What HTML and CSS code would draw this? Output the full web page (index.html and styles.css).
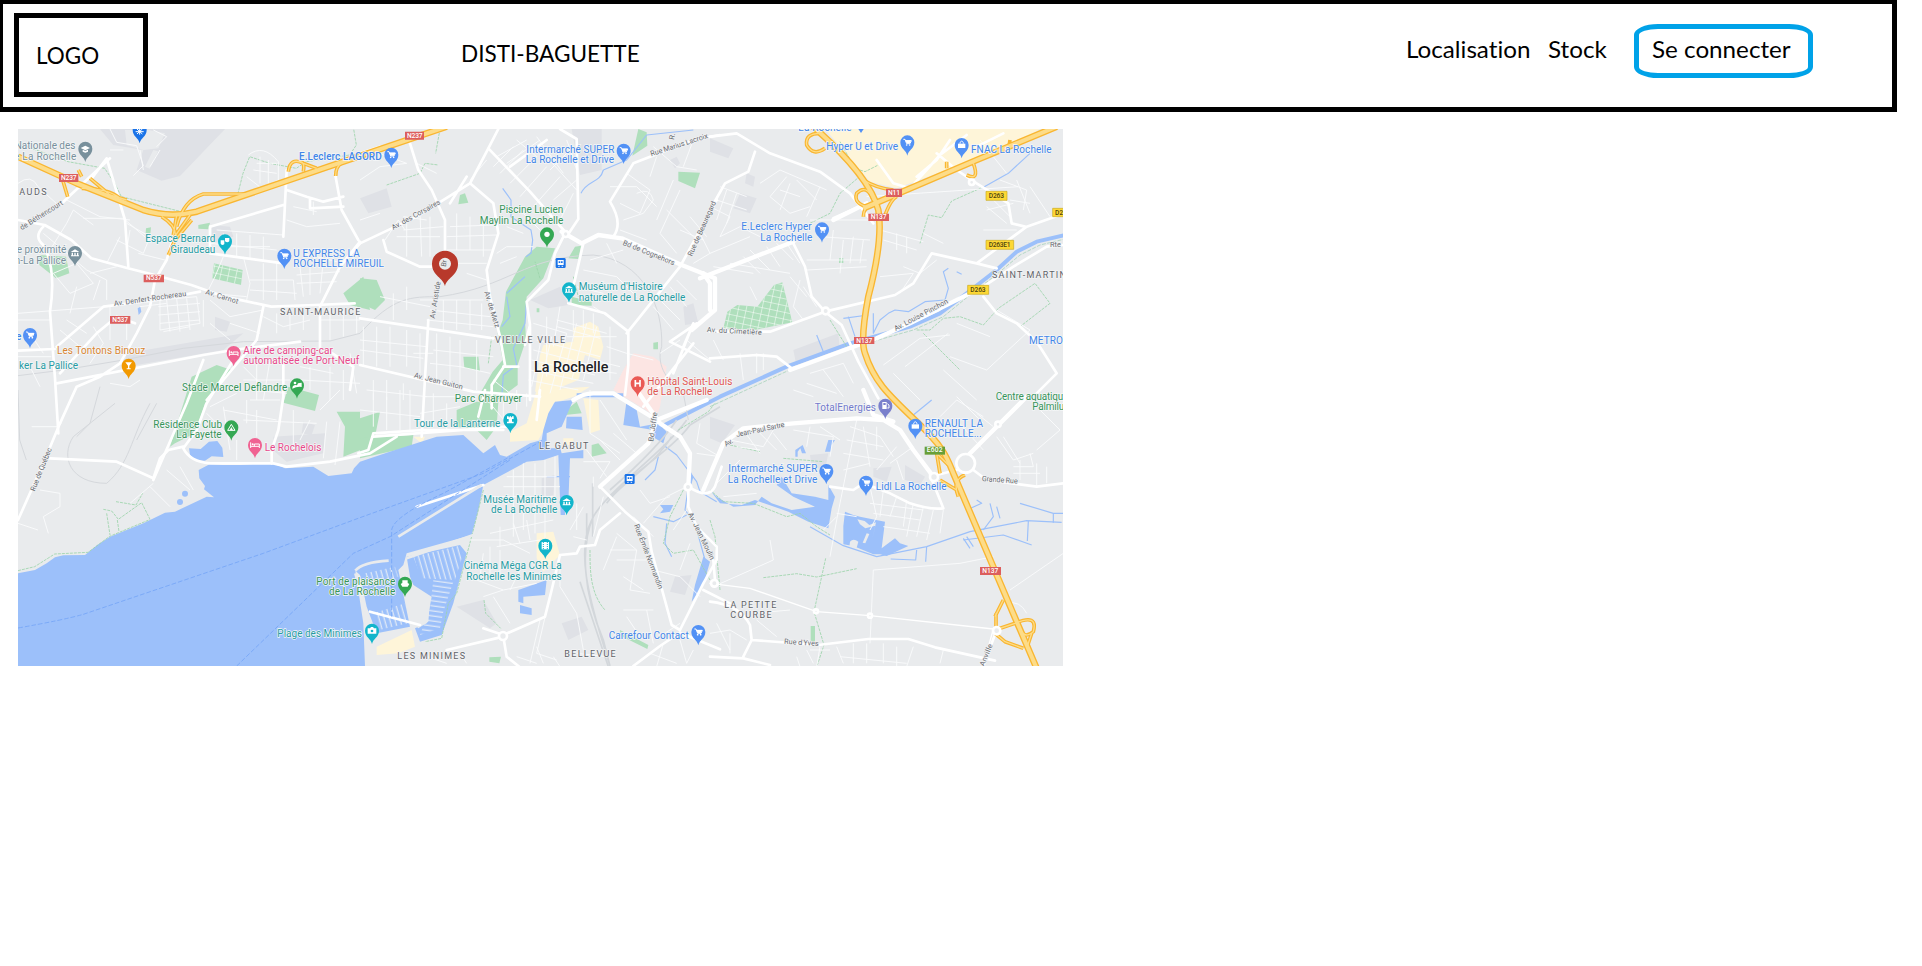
FILE: index.html
```html
<!DOCTYPE html>
<html lang="fr">
<head>
<meta charset="utf-8">
<title>Disti-Baguette</title>
<link rel="stylesheet" href="styles.css">
</head>
<body>
<header class="topbar">
  <div class="logo"><span class="word word-logo">LOGO</span></div>
  <div class="brand"><span class="word word-brand">DISTI-BAGUETTE</span></div>
  <nav class="nav">
    <a class="nav-loc"><span class="word word-loc">Localisation</span></a>
    <a class="nav-stock"><span class="word word-stock">Stock</span></a>
    <a class="login"><span class="word word-login">Se connecter</span></a>
  </nav>
</header>
<main class="content">
<svg class="map" viewBox="24 27 3135 1611" role="img" aria-label="La Rochelle">
<defs>
  <path id="pin" d="M0 40C-3 23-21 20-21 0A21 21 0 1 1 21 0C21 20 3 23 0 40z"/>
  <g id="cart"><path class="ico" d="M-12-9h5l5 13h10l4-9h-17"/><path class="icof" d="M-6-6H12L7 3H-2z"/><circle class="icof" cx="-2" cy="8" r="2.5"/><circle class="icof" cx="7" cy="8" r="2.5"/></g>
  <g id="bag"><path class="icof" d="M-11-4h22v13h-22z"/><path class="ico" d="M-5-4c0-10 10-10 10 0"/></g>
  <g id="bed"><path class="ico" d="M-13-8V9M-13 4H13V9M13 4V-3H-2V4"/><circle class="icof" cx="-7" cy="-2" r="3"/></g>
  <g id="museum"><path class="icof" d="M-13-3L0-11 13-3zM-10-1h4v8h-4zM-2-1h4v8h-4zM6-1h4v8H6zM-12 7h24v3h-24z"/></g>
  <pattern id="berth" width="15" height="60" patternUnits="userSpaceOnUse" patternTransform="rotate(-16)"><path class="berth" d="M7 0V60"/></pattern>
  <pattern id="berth2" width="60" height="15" patternUnits="userSpaceOnUse" patternTransform="rotate(8)"><path class="berth" d="M0 7H60"/></pattern>
  <pattern id="plots" width="23" height="20" patternUnits="userSpaceOnUse" patternTransform="rotate(12)"><path class="blockline" d="M0 0H23M0 0V20"/></pattern>
</defs>
<path class="ground" d="M0 0H3200V1700H0z"/>

<g class="zone">
  <path d="M270 27H645L510 168 455 182 380 150 400 90 310 75z"/><path d="M605 315l55 5 10 30-65 20zM615 590l45 15-10 30-35-5zM350 700L700 640 640 690 380 735 340 760z"/>
  <path class="ground" d="M345 30h70l50 10-20 45-45 5-50-15zM430 90l14 4-25 52-14-6z"/>
  <g transform="translate(1050 0)"><path d="M635 27H725V150L660 165zM0 235l80-30 15 55-70 20zM510 540l90-40 25 55-60 10zM930 120l20-10 10 20-15 15zM970 560l30-10 15 60-40 5z"/></g>
  <g transform="translate(2100 0)"><path d="M0 55l70 30-15 30-55-20zM110 160l25 10-5 30-25-10zM90 220l50 15-20 45-50-15zM250 690L385 640 390 695 260 740z"/></g>
  <g transform="translate(0 810)"><path d="M790 140L945 130 940 190 830 215 795 185zM880 95l35 10-10 30-30-5z"/></g>
  <g transform="translate(1050 810)"><path d="M545 265l40-10-5 60-35 10zM290 650l80-20 40 70-20 15zM945 560l50-5-20 60-45-10zM605 700l60-20 20 40-60 30z"/></g>
  <g transform="translate(2100 810)"><path d="M0 80l75 25-40 55-35-15zM300 195l55-5-10 50-40-10zM490 235l55-5-15 45-40-15zM585 225l60 35-15 25-45-15z"/></g>
</g>

<g class="urban">
  <g transform="translate(1050 0)"><path d="M690 605l25 15 15 60-10 40-45-15-20 75-50 20-20 20-60-5 15-110 10-30 90-10 0-40z"/></g>
  <g transform="translate(2100 0)"><path d="M345 27H990L900 80 560 205 480 185 400 90z"/></g>
  <g transform="translate(1050 810)"><path d="M530 0L690-10 640 20 580 40 555 115 535 150 450 155 450 125 500 100zM670 25l45 5 5 90-30 10zM610 145l30 0v20h-30zM530 430l50-5 20 70-50 50-20-40zM50 770l105-50 10 50-50 20-65 5zM160 140h35l-10 20z"/></g>
</g>
<path class="hospital" d="M1870 700l60 10 40 30-20 120-10 30-130-80 30-60z"/>

<g class="park">
  <path d="M1060 470L1000 520l20 35 60 15z"/><path d="M565 315l35-7-5 20-30-2zM408 325l15-3-2 20-14-2z"/>
  <path d="M88 405l80 5 10 50-40 15-50-40zM612 430L698 450 693 495 606 475z"/>
  <path d="M480 980l65-210 75-35 45 15-80 100-30 90-60 30zM835 800l92 25-12 48-95-25z"/>
  <path d="M980 875h70v20l60-20-20 100-90 35 5-90z"/>
  <path d="M1050 955l160-10-5 35-155 35z"/>
  <g transform="translate(1050 0)">
    <path d="M0 475l50 5 25 60-30 30-45-20zM835 27l25 10 2 40-45 30zM955 155l65 3-15 47-50-22zM300 225l15-5 10 28-30 5zM625 415l20-35 18-3-8 40zM310 710h45l5 43-47-10zM635 530l60 15v12l-60-2zM530 565h8v12h-8z"/>
    <path d="M495 410l35-30 55 5-35 90-50 55-5 70 3 60-25 75 0 60-60 45-60 25 10-50 35-60 30-35-15-80 15-40 10-85z"/>
    <path d="M880 668l14-2v22h-14z"/>
  </g>
  <g transform="translate(2100 0)"><path d="M40 625l12-50 30-20 60 5 50-65 25-8 30 120-110 22zM387 415h13v14h-13z"/></g>
  <g transform="translate(1050 810)"><path d="M290 60l60-25 65 0-5 75-30 40-30-30-60-10zM625 55l25-20 15 35-50 5zM695 165l20-5 25 30-45 10zM780 720l85 45-3 12-80-40zM388 802l35-2-5 20-30-5z"/></g>
  <g transform="translate(2100 810)"><path d="M302 708h13v52h-13z"/></g>
</g>
<path fill="url(#plots)" d="M2140 625l12-50 30-20 60 5 50-65 25-8 30 120-110 22zM612 430L698 450 693 495 606 475z"/>

<g class="water">
  <path d="M24 1360L75 1350 110 1330 135 1312 160 1306 225 1305 262 1275 300 1250 400 1210 465 1178 495 1175 590 1130 612 1132 582 1108 585 1098 568 1075 566 1050 600 1032 640 1035 690 1035 760 1030 800 1034 825 1045 910 1040 955 1068 1025 1060 1032 1045 1050 1025 1130 998 1280 950 1360 945 1420 1000 1455 975 1470 1005 1490 1010 1560 970 1595 960 1600 930 1615 880 1635 845 1690 840 1655 920 1610 940 1610 985 1645 985 1645 965 1655 1000 1720 990 1720 1015 1680 1015 1675 1150 1665 1150 1665 1185 1652 1185 1645 1005 1600 1020 1550 1025 1420 1095 1405 1170 1385 1245 1190 1300 1180 1335 1165 1350 1200 1520 1100 1540 1070 1460 1050 1365 1036 1352 1060 1510 1065 1638 24 1638z"/>
  <path d="M537 985l35 2 25-22 25-2 15 20 3 28-35-2-20 13-30-2-15-15z"/>
  <circle cx="525" cy="1121" r="9"/><circle cx="510" cy="1146" r="9"/><path d="M383 565l8-5 3 15-8 10z"/>
  <g transform="translate(1050 810)">
    <path d="M140 500L300 465 320 490 280 640 245 735 180 755 165 715 200 700 215 620 160 585 150 560z"/>
    <path d="M620 80l45 0 3 40-50-5zM800 30l30 30 10 50 55-10 25 25-10 35-25-15-5-25-90-15zM475 600l85-30-5 45-65 5 0 20-15-5zM480 645l35 10 0 20-35-5zM900 345l40 0-10 20-30 5 10-12zM990 240l10 20-10 40M1030 500l20 15-20 70-35 50 10-50z"/>
  </g>
  <g transform="translate(2100 810)">
    <path d="M0 300l20 20 50 30 65-5 20-25 30 20 60 20 70-10-65-30-50-35 15-25 30 50 70 10 40 10 0-45 20 35-10 35-10 60-60-20-60-30-100-35-40 15-65-5z"/>
    <path d="M405 365l25 10 20 5 75 15-10 80 40-30 15 15 25 8-65 30-20-5-20 0-60-25-30-5 0-55zM256 200l0-20 22-15 10 25-12 0-5-15-8 10 0 15zM345 185l10-35 20 0-10 15-3 20z"/>
  </g>
</g>
<path fill="url(#berth)" d="M1210 1310L1345 1278 1360 1300 1335 1380 1235 1375zM1065 1360l90-20 10 30-85 30zM1090 1480l95-30 8 60-85 20z"/>
<path fill="url(#berth2)" d="M1270 1380l60 5-30 90-10 50-60 20 30-80z"/>
<path class="land" d="M1185 1400l20-10 55 55-5 60-30 20-20-20z"/>
<path class="islets" d="M2542 1198l22 5 14 12 20-8-12 55 10-45-30 8-16-12zM2520 1265q10-12 25 0l-5 18-22-2zM2570 1240l8 2-12 28-8-2z"/>

<g class="stream">
  <g transform="translate(1050 0)"><path d="M730 150C720 190 680 180 663 220M730 150L800 120 860 45 1000 30M428 205l25 35 0 50 60 40 5 30-5 40-15 10M495 470l-55 50M500 540l-5 70-35 75 10 50-40 30-5 70M440 530l10 60-25 30"/></g>
  <g transform="translate(2100 0)"><path d="M815 205L895 160 960 100M400 595l75-10M415 590l20 60M490 580v60l20-40 25-20 20-10 40 5 50-30 60-5 10-35-15-50 15-10M740 455l15 8M320 645l20 50"/></g>
  <g transform="translate(1050 810)"><path d="M910 165l40 30 60 80 10 30 50 30M880 380l60 15 40-20M920 400l-5 60 20 40M985 290l-10 70 30 40 30 110M560 260l70 0M855 270l30-30 10-40"/></g>
  <g transform="translate(2100 810)"><path d="M610 75l55-45M770 360l45-20-15-10M840 340l10 40-30 40M860 350l10 35M930 340l100 30h30M1030 370v28M770 440l20 30M760 445l20 30"/><path d="M300 410l100 57 100 33 150-30 130-45 170-33 105 5M760 450l120-15 85 30M650 470l-3 45M620 480l-3 30-75-3M955 393l-3 60"/></g>
</g>
<path class="canal" d="M1700 826H1840M1945 925L2130 830 2330 740 2520 670 2700 620 2790 580 2870 520 2960 450 3020 395 3080 365 3165 345"/>
<path class="canalbank" d="M2100 860L2330 754 2520 684 2710 630 2800 590 2880 525 2970 455 3030 405 3090 375 3165 357"/>

<g class="rail">
  <path d="M24 767L160 750 340 720 520 685 700 665 960 663 1050 640M24 810l5 150 20 60M270 800L240 910 200 950"/>
  <path d="M315 850L190 950C150 1010 180 1090 290 1090 360 1030 360 960 420 850M380 960l60-110"/>
  <path d="M1050 640C1150 530 1200 530 1290 530 1500 500 1540 410 1750 405 1900 420 1960 560 1955 680 1935 740 1980 790 2020 820L2035 900"/>
</g>
<g class="tracks">
  <path d="M2040 915C1980 1000 1800 1100 1750 1190 1710 1280 1720 1420 1780 1560L1800 1638M2030 900C1960 1000 1780 1120 1745 1200 1700 1290 1730 1420 1800 1638M1710 1385l40 120 45 135M1730 1180v90M1748 1090v160M2130 860L2040 915M1985 950C1930 1040 1830 1090 1790 1150M2000 900C1960 960 1880 1040 1800 1110"/>
</g>

<g class="trail">
  <path d="M24 1352l50-12 60-38 100-5 65-48 120-50M318 1145l60 10 20-35M280 1168l25 5 20 25 70-50 25 50M290 1180l10 65M322 1200l5 35"/>
  <path d="M24 70l150 55 110 20 30 45 20 40 180 45 50-50 120-5 15-60 20-50 60 20 80 15 30-20 130-20 20-30-10-60"/>
  <g transform="translate(1050 0)"><path d="M240 27L227 100M80 195l100-35 15-30 40 5M540 475l-15-50M640 470l15 60M395 650l-10 80"/></g>
  <g transform="translate(2100 0)"><path d="M390 65l45 80 30 10 40-20M300 310l60-30 30-60 70-60M630 370l25-85 40 8 30-50 90-40M620 630l40 0 40-35 50-5 70 25 45-50 110-75 45 60-90 70M640 640l110 110M360 600l50 80"/></g>
  <g transform="translate(1050 810)"><path d="M370 300l-30 120-50 190-25 30-20 105-50 10M372 630l5 40 45 45M690 480c0 60 0 130 45 180M970 300l-40 80-20 80 30 30 60-10 50 90M1065 40l-20 25-90 55"/></g>
  <g transform="translate(2100 810)"><path d="M0 300l40 35 90 5 100 40 40-10 50 40 40 25M0 390l15 50 15 160M160 563l100-12 60 10 120-25M347 505l-35 160 30 100-20 60M60 165l90 20M220 205l120 10"/></g>
</g>

<g class="minor">
  <path d="M24 190q40-30 60 10l60 55M150 260l20-20 100 50 90 10M190 270l-20 40-50 80M190 270l60 45M220 295l120 0 70 60M350 310l70 40-20 50-80-40M360 330l-10 60M100 340l130 110 60 30 0 60M130 460l70-30 50 60-70 30zM200 500l-20 80M240 460l80-20M330 350l-40 80M24 580l260-20M24 600h100M300 560v100M385 400l80 20M250 540l20-60M350 600l0 60"/>
  <path d="M300 27l20 40 60 10 20 60-30 30M300 90h40M390 90l10 60M430 30l40 20-30 30M450 90l-30 50"/>
  <path d="M715 105q45-35 90 20l0 55-50 25-45-35M740 130h60M730 150l70 10M750 110v80M775 120v80M910 245l0 40M850 260l70 15M830 300l60 20 100-10M620 330l200 15M640 340v55M680 340v70M720 345v75M760 350v70M600 370l200 20M660 380h120M640 410l-25 60-20 40M700 410l20 80-10 50M600 520l110 10M720 480l130 0 5 60M760 430v110M800 430v110M720 510l140 10M870 440l10 90M900 440v85M940 420l-10 100M860 465l130-10M860 490l120-5M880 400l120 30"/>
  <path d="M450 540l110-10 10 80-120 20zM470 540l10 95M500 535l10 100M530 535l10 95M445 560l125-10M445 585l125-10M450 610l120-10M460 635l80-15M580 540l0 80M600 540l60 50 100-20M600 610l60 50M760 590l60 30 80-20M800 580v60M840 570v60M880 560v70M660 610l90 30M930 600h120M960 560v100M1000 570v80M1040 560v80"/>
  <path d="M150 630l60 50M250 620l30 50-40 60M50 720l40 80M24 710h100M60 640l40 60M170 600l60 40M300 790l60 10 30-20M390 560l80-10M640 780l40-50M700 740l60 60M740 730v110M780 720l-20 120M700 780l140 0M720 810l110 10M870 740l100 20M900 740v70M960 740v100M1000 750v90M870 780l180 10M1020 700l20 120"/>
  <g transform="translate(1050 0)"><path d="M0 180l60-40 80-10M30 90l110 40M170 130l60 30M0 300l60-20M75 360l40-60 20 30M130 290l70 10M130 330l120-10M110 350l130 0M140 310l0 100M180 280l5 130M210 290v120M270 320l130-5M260 350l150-5M290 280v110M330 290v100M370 290v120M260 390l140 0M280 430l100 0M320 460l60 20M380 120l-50 60M400 140l60-60M420 160l70-70M450 190l80-80M480 230l80-90M520 260l80-90M410 110l90-50M440 130l100-70M570 150l60-60 20 60M580 240l70-60M600 300l40-80M620 60l30 80M470 60l60 50M530 50l80 110M550 100l100 110M420 260l60 10 60 60M440 320l50 20M410 400l30-20 80 0M420 430l50-20"/>
  <path d="M100 520v80M60 530l150 30M140 500v70M180 540l190 0M210 570l180 20M250 540v90M290 540v90M330 540v90M365 550v80M200 600l200 20M10 620v120M50 620v120M90 620v120M140 630v110M180 640v120M0 660l200 20M0 690l190 25M230 640v150M270 650v150M300 660v130M350 660v150M220 690l180 20M210 730l90 10 90 20M160 700h60M40 780v60M80 780v60M130 790v50M20 810l180 20M400 780l50 40"/>
  <path d="M750 200l80 0 60 60M800 160l70 50-30 70-60-30M830 220q40-20 50 20l-30 40-60 20M890 110l-20 60M880 80l70 60 60 10M940 180l-50 120M960 210l-60 130M1000 60l-30 80M990 290l50 60M960 330l70 30M920 270l100 100M900 340l50 60M1020 340l30 60-50 30M780 330l80 30M670 450l100 20 60 60M650 500l80 20M690 420l100-30M740 370l30 60M700 560l60 40M600 560l-20 120M560 590v180M520 610l100 30M640 570v60M670 570v60M700 580v60M590 600l150 40M620 650h150M750 620v160M740 680l60 20M700 720l80 20M690 750l80 10M800 700l80 20M880 560l60 70M900 540l60 60M930 500l50 60M950 480l60 60M980 660l70 60M900 700l60-40"/>
  <path d="M530 660l190 50M520 690l190 50M515 720l190 45M510 750l190 40M505 780l150 30M590 620l130 35M650 610l-50 200M680 610l-45 170M710 620l-40 160M620 640l-50 180M575 650l-40 170M545 650l-30 150"/></g>
  <g transform="translate(2100 0)"><path d="M150 190l60-40 140 60M230 170l-50 60 60 50 60-20M210 210l60 20M240 190l-30 80M260 180l60 60M330 200l-40 90M30 200l80 30M20 240l90 30M0 260l60 30-30 60M50 210l-30 90M80 220l-30 90M30 350l60-30 60 30M0 400l120-50M120 390l60 60M170 380l40 60M200 370l50 50M230 370l40 60M60 430l180 30M100 410l50 50M10 440l120 20M290 420h180M290 450l180-10M300 300l180 0M330 350l150 10M370 330l-10 90M400 360l-10 100M430 350l-10 80M460 360l-10 70M240 470l50 60M270 480l-20 80 30 40M280 500l40 60M510 330l130 35M520 360l100 30M560 340v50M590 350v50M510 470l100-10M580 440l50 20 50-40M610 460l-40 60M640 340l60 30M810 60l80 100M840 230l60 60M830 260l60 50M870 180l80 30-10 60M920 180l40 100M960 200l60 90M900 240l60 10M830 270l80-20M820 330l100 0M120 500l20 40M90 700l10 80M140 700v60M160 700v50M10 660l30 60M300 760l100-30 30 60M340 750l60 80M290 790l90 30M250 810l60 20"/></g>
  <g transform="translate(2100 0)"><path d="M470 230L925 200M585 740l130-100M550 760l80 80M520 735l110-80 90-10M740 610l100 40M860 570l100 60-130 120-110-40M700 750l100 90"/></g>
  <g transform="translate(0 810)"><path d="M24 400l60 20M90 300l60 10 0 40-50 30 15 50M65 110h80M420 290l60 60M470 240l70 60M430 280l-70 60M510 230l40 70M640 50l20 130M680 150v60M710 30v70M740 60v80M640 60l160 30M700 90l220 10M720 30l90 0M850 60v120M900 90l-30 60M950 95l-10 110M990 95l-15 130M930 60l60-60M590 70l60 60 30-20M600 50l80-40"/></g>
  <g transform="translate(1050 810)"><path d="M40 10v100M80 20v100M120 0v120M150 0v120M220 10v100M260 40v80M0 60l180 20M180 70l120-20M190 20l160 0M390 40l50 60M430 20v70M470 0v60M500 10v40M690 0v130M720 30l80 120M690 130l90 60M760 130l70 60M720 150l60 60M670 215h80l-30 50M680 180l60 80M700 260l0 30M460 240v200M490 220v200M525 220v210M555 210v240M585 200v120M440 260h150M430 290h170M400 320l180 0M390 430l190-40M410 470l130-20M390 470v80M420 410v60M460 400l20 60M500 390l10 60M370 490l-10 70M330 450l100 0 80 40M350 570l80 30 100-20M420 480v90M480 540l-30 60M560 660l-30 130 60 20M600 520v70l50 80 20 110M540 690l-30 130M430 600l-60 20M400 620l50 80M640 440l40 10M630 420l40-70M650 340l0 80M730 320l-30 120M770 430l60 50-20 120 60 10M750 480l80 0M770 510l90 0M790 560l60 40M770 440l-40 100M850 400l70-80 60-30M880 440l-60-60M940 420l40-60M880 540l80 20 60 60M790 660l90 0M990 460l-30 80M840 300l30 40 60-20"/>
  <path d="M200 800l60 20M300 790l20 30M470 800l60 20M530 770l20 50M580 800l20 30M650 790l90 10M800 680l40 60M860 660l20 100M900 740l60-40M870 790l80 30M910 760l-20 70M960 750l20 70M1000 780l-20 40M1020 100l-10 60 70 40M1080 200l-70-10"/></g>
  <g transform="translate(2100 810)"><path d="M440 90l-60 300-20 110M60 150l100 20 30-50M100 120l50 70M140 120l60 60M190 130l40 50M80 170l70 10M20 280l70-70M40 320l100-10M250 120l120 20-10 60M300 110l-10 60M330 110l60 40M420 110l90 30 40 60M410 150l110 20M400 190l120 20M400 240l80-20M460 110l20 120M500 110v70M560 170l-60 70M540 220l70-50M560 210l20 60M480 290l20 90-20 40M520 300l-10 80M560 320l-20 60M590 330l-10 80M480 340l160 20M490 370l140 20M520 410l140 20M610 340l-20 100M640 350l-20 90M670 360l-20 90M700 360l-10 70M380 370l60 10M340 420l40-40M180 450l10 60-180 80M490 540l-10 220M490 540l260-20 100-20M900 600l160-110M890 640q40-10 60 30M740 90l80 90M690 80l50-50 80 50M740 20l80 80M860 140l50 70 60-20M910 230h60l-10-40M910 250h80M930 210v60M980 220v70M1010 230v50M880 140l50 80M990 60l60 60-70 60M800 70l50 40"/>
  <path d="M130 670l110-10M140 690l60 50M0 730l60-10 50 30M20 700l40 80M60 730v60M260 800l10 30M290 780l20 40M330 770l-10 60M380 770l20 50M430 760v60M470 760v60M520 760v60M560 770v60M390 800l200 20M610 770l-20 60M700 780l-10 40M300 780l60 0"/></g>
</g>

<g class="road">
  <path d="M160 245L300 115M245 175L290 115 345 300 355 440M24 300l80 15 80 45 60 55 110 30 80 20 110 30 100 35 140 30 130-5 120-5"/><path d="M100 320q-30 30 0 55 40 70 20 200l15 200 10 165M490 350L470 420 435 480 420 560 380 640 330 730 270 770M140 680l140-120 160-20 130-25M150 760l110-120 60-50 55 20M24 692l110-5M140 790l440-85 90-15 200-25M270 770L200 800 150 910M830 150l-10 200M600 320l220-65M600 320v80l220 30M830 210l60 20 50 15 60-15M900 235v30l100-5M975 160l20 110 50 90M1050 365L990 440 930 560V690M740 660L760 560M740 660l-50 60L590 840M580 720l-50 130-100 230M990 440l60-70"/>
  <path d="M150 910L100 1030 24 1200M120 1015l200 10 110 50M430 1075l20-60 25-25 45-10M670 720L590 850 560 930 520 985q20 40 80 45l190 0 40 10 130-15 120-25 80-50"/>
  <path d="M820 720v110l-15 100-20 60v40M950 690l80 50-10 70"/>
  <g transform="translate(1050 0)"><path d="M0 370L170 290 330 190 385 85 415 27M150 70l25 80 40 60 40 90v90M70 360l10 35 100 45 45 0M385 85L510 215 615 335M600 27l50 30 5 240-30 45M330 190l70 60 15 90-35 110 10 80 30 120 15 85-40 60v70M0 595l400 60M205 600l-20 350M0 735l340 80 200 15M60 80l-60 20M320 170l-50 80"/><path class="big" d="M605 335l60 35 50-25 70 10 180 80 100 40 0 95-70 60"/><path d="M760 350q30-40-10-105L820 130 1000 60 1080 45M615 340l-30 60-20 80-65 65 10 70-15 60M670 370l-30 130M625 550l110 30 70 55v100l-10 90M800 640L960 440 1070 240M1010 610l-80 55 120 60M1000 610l-60 150M510 620l0 220M1000 610l-30 70M1000 670L850 860M430 740l45 0M450 140L560 60"/></g>
  <g transform="translate(2100 0)"><path d="M0 50L80 40 180 100 330 155 420 220 490 310M135 95l-20 60-70 35-45 80M470 250l-100 45M250 370l35 70 20 90 40 45 50 40 50 110 60 110M0 635L180 635 345 575 555 525 610 490 665 400 800 430 860 445M800 430L950 320 1050 285M680 100l60 50 60 40 95 60 10 60 40 10M500 120l50 70 50 15 90-100 80-60M720 60l-40 60-60 50M800 80l80-40M820 530l40 50 60 30 60 55 60 95-60 60M0 715l140-10 60 5 45 35"/><path class="big" d="M-30 475L250 365M240 750L500 655 600 610 820 500M370 300l100-50M-20 460l20 30 0 80"/><path d="M820 500l90-60 100-60 100-10"/></g>
  <g transform="translate(1050 810)"><path d="M40 140l400-30M40 130l150-10 240 0M40 130l-15 50-30 10M355 80l20-80M540 0l-10 90"/><path class="big" d="M890 90L865 160 720 290M830 0L900 100 960 140 990 190 985 290"/><path class="big" d="M640 30q30-20 60-20l60 0 130 80 150-60"/><path d="M720 290l75 75 70 60 10 60 60 220 25 15 70-140 40-70V470l-60-60-25-60V290q60 40 80 0l20-60M780 370L720 420 705 465 660 470 650 490 600 495 575 600 555 680 430 735M430 740l10 60 50 40M430 740L260 780M180 705l-150-40M820 828l80-60 60-40 120 50M1030 600l80 40M430 735l-60-20M170 350l200-65"/></g>
  <g transform="translate(2100 810)"><path class="big" d="M-20 300l60-140 60-45 150-15 190-15 80 5 50 30 40 60 60 80"/><path class="big" d="M460 0l30 75 60 20M770 200L950 20"/><path d="M700 355L660 255M700 355q-40 5-100-15l-60-30-80-30-30 20-70-10M790 240l40 30 150 20 80-10M740 240l-60 15"/><path class="lane" d="M0 580l120 15 200 70 160 12 370 40-25 90"/><path d="M0 635q90 10 120 70l5 45 200 15 150-18 120 0 80 25 180 40M125 750l-25 50M0 800l100 5 80 20M15 570l-5-60M860 720l-40 108"/></g>
</g>
<g class="pier">
  <path d="M1165 1250l250-155M1190 1315L1290 1280 1390 1245M1036 1352q20-25 100-30M1036 1360l50 180"/>
</g>
<g class="hwy">
  <path class="edge ramp" d="M158 180l15 50M205 150l10 20M215 205q80 0 115 30M240 175l60 50 50 15M500 285l-10 60M540 285l-50 70M545 300l-50 60-20 45M455 290q50 30 40 70M500 320q20-80 80-98h130M835 155q5-45 45-25l40 15M880 155q5-30-10-30M977 168q0-30 20-40"/>
  <path class="edge ramp" d="M2430 40q-45 0-40 35 20 35 55 10M2570 260q-40-10-30-40 30-30 50 20M2620 300q20-60 40-70M2560 290q0-30 30-40M2560 180q40 25 90 30M2810 145v-20M2870 165q40 20 20-35M3000 60l-3 20"/>
  <path class="edge ramp" d="M2790 1060l-10-60 5-20M2780 1000l35 35M2790 1080l50 30M2845 1130q-20-50 20-65M2980 1440l-25 50M2955 1530l60-20q70-30 55 25-25 20-35 0M2955 1540l30 25 55 20M3065 1540l-15 45M2958 1480V1525"/>
  <path class="edge" d="M24 110L200 190 400 270Q480 295 560 275L940 145 1310 20M2410 20Q2580 170 2605 270 2620 360 2575 530 2550 660 2565 700C2590 780 2630 820 2720 905 2800 980 2810 1010 2830 1060L3080 1645M2560 265L2900 120 3140 20"/>
  <path class="fill ramp" d="M158 180l15 50M205 150l10 20M215 205q80 0 115 30M240 175l60 50 50 15M500 285l-10 60M540 285l-50 70M545 300l-50 60-20 45M455 290q50 30 40 70M500 320q20-80 80-98h130M835 155q5-45 45-25l40 15M880 155q5-30-10-30M977 168q0-30 20-40M2430 40q-45 0-40 35 20 35 55 10M2570 260q-40-10-30-40 30-30 50 20M2620 300q20-60 40-70M2560 290q0-30 30-40M2560 180q40 25 90 30M2810 145v-20M2870 165q40 20 20-35M2790 1060l-10-60 5-20M2780 1000l35 35M2790 1080l50 30M2845 1130q-20-50 20-65M2980 1440l-25 50M2955 1530l60-20q70-30 55 25-25 20-35 0M2955 1540l30 25 55 20M3065 1540l-15 45M2958 1480V1525"/>
  <path class="fill" d="M24 110L200 190 400 270Q480 295 560 275L940 145 1310 20M2410 20Q2580 170 2605 270 2620 360 2575 530 2550 660 2565 700C2590 780 2630 820 2720 905 2800 980 2810 1010 2830 1060L3080 1645M2560 265L2900 120 3140 20"/>
</g>
<g class="circle">
  <circle cx="2867" cy="1030" r="28"/><circle cx="2772" cy="1071" r="12"/><circle cx="2960" cy="1532" r="11"/><circle cx="2447" cy="573" r="10"/><circle cx="1479" cy="1548" r="12"/><circle cx="2034" cy="1101" r="10"/><circle cx="2113" cy="1390" r="10"/><circle cx="1667" cy="342" r="9"/><circle cx="2885" cy="187" r="8"/><circle cx="2418" cy="1474" r="6"/><circle cx="2580" cy="1487" r="6"/><circle cx="2964" cy="913" r="8"/>
</g>
<path class="ferry" d="M24 1524Q160 1500 220 1483L760 1300 1050 1193 1420 1060 1600 960M680 1638L1030 1300 1140 1250 1500 1020M1145 1490V1230Q1150 1190 1300 1120L1500 1010"/>

<g class="shield">
  <path class="red" d="M147 162h58v24h-58zM401 464h61v23h-61zM300 588h61v23h-61zM1185 35h57v24h-57zM2628 206h48v25h-48zM2575 281h62v22h-62zM2532 651h61v21h-61zM2910 1341h63v24h-63z"/>
  <path class="green" d="M2744 980h61v24h-61z"/>
  <path class="yellow" d="M2928 214h63v27h-63zM3128 265h50v25h-50zM2928 361h83v27h-83zM2873 496h63v27h-63z"/>
  <g class="st"><text x="153" y="181" textLength="47">N237</text><text x="408" y="480" textLength="47">N537</text><text x="307" y="605" textLength="47">N537</text><text x="1191" y="54" textLength="47">N237</text><text x="2634" y="226" textLength="36">N11</text><text x="2582" y="298" textLength="48">N137</text><text x="2539" y="668" textLength="48">N137</text><text x="2917" y="1358" textLength="48">N137</text><text x="2750" y="997" textLength="48">E602</text></g>
  <g class="st dark"><text x="2936" y="234" textLength="46">D263</text><text x="3135" y="284">D263</text><text x="2936" y="380" textLength="66">D263E1</text><text x="2881" y="516" textLength="46">D263</text></g>
</g>

<g class="street">
  <text transform="translate(35 331) rotate(-32)" textLength="148">de Béthencourt</text>
  <text transform="translate(313 558) rotate(-8)" textLength="219">Av. Denfert-Rochereau</text>
  <text transform="translate(585 522) rotate(17)" textLength="102">Av. Carnot</text>
  <text transform="translate(1150 330) rotate(-29)" textLength="163">Av. des Corsaires</text>
  <text transform="translate(1274 596) rotate(-81)" textLength="112">Av. Aristide</text>
  <text transform="translate(1423 517) rotate(73)" textLength="112">Av. de Metz</text>
  <text transform="translate(1211 772) rotate(14)" textLength="150">Av. Jean Guiton</text>
  <text transform="translate(1924 109) rotate(-18)" textLength="180">Rue Marius Lacroix</text>
  <text transform="translate(2046 410) rotate(-66)" textLength="178">Rue de Beauregard</text>
  <text transform="translate(1837 374) rotate(22)" textLength="166">Bd de Cognehors</text>
  <text transform="translate(2090 636) rotate(3)" textLength="165">Av. du Cimetière</text>
  <text transform="translate(2657 633) rotate(-28)" textLength="180">Av. Louise Pinchon</text>
  <text x="3120" y="382">Rte</text>
  <text transform="translate(74 1115) rotate(-68)" textLength="138">Rue de Québec</text>
  <text transform="translate(1930 965) rotate(-82)" textLength="88">Bd Joffre</text>
  <text transform="translate(1872 1216) rotate(69)" textLength="206">Rue Émile Normandin</text>
  <text transform="translate(2034 1182) rotate(64)" textLength="155">Av. Jean Moulin</text>
  <text transform="translate(2148 980) rotate(-30)" textLength="26">Av.</text>
  <text transform="translate(2180 951) rotate(-12)" textLength="148">Jean-Paul Sartre</text>
  <text transform="translate(2915 1083) rotate(4)" textLength="108">Grande Rue</text>
  <text transform="translate(2322 1571) rotate(4)" textLength="104">Rue d'Yves</text>
  <text transform="translate(2922 1640) rotate(-68)" textLength="70">Anville</text>
  <text transform="translate(1992 60) rotate(-80)">R.</text>
</g>
<g class="area">
  <text x="28" y="225" textLength="82">AUDS</text><text x="810" y="584" textLength="241">SAINT-MAURICE</text><text x="1455" y="668" textLength="210">VIEILLE VILLE</text><text x="2946" y="473" textLength="222">SAINT-MARTIN</text><text x="1587" y="988" textLength="148">LE GABUT</text><text x="1162" y="1616" textLength="203">LES MINIMES</text><text x="1663" y="1612" textLength="154">BELLEVUE</text><text x="2143" y="1465" textLength="156">LA PETITE</text><text x="2161" y="1493" textLength="124">COURBE</text>
</g>
<text class="city" x="1572" y="757" textLength="223" lengthAdjust="spacingAndGlyphs">La Rochelle</text>

<g class="poi">
  <g class="slate"><text x="14" y="88" textLength="182">Nationale des</text><text x="12" y="121" textLength="187">e La Rochelle</text><text x="20" y="400" textLength="149">e proximité</text><text x="14" y="432" textLength="154">n-La Pallice</text></g>
  <g class="teal"><text x="406" y="366" textLength="210">Espace Bernard</text><text x="481" y="398" textLength="135">Giraudeau</text><text x="27" y="746" textLength="177">ker La Pallice</text><text x="1706" y="510" textLength="252">Muséum d'Histoire</text><text x="1706" y="543" textLength="320">naturelle de La Rochelle</text><text x="1212" y="920" textLength="259">Tour de la Lanterne</text><text x="1420" y="1148" textLength="220">Musée Maritime</text><text x="1443" y="1180" textLength="199">de La Rochelle</text><text x="1361" y="1347" textLength="294">Cinéma Méga CGR La</text><text x="1369" y="1380" textLength="286">Rochelle les Minimes</text><text x="802" y="1552" textLength="254">Plage des Minimes</text></g>
  <g class="blue"><text x="867" y="121" textLength="248" class="strong">E.Leclerc LAGORD</text><text x="850" y="410" textLength="199">U EXPRESS LA</text><text x="850" y="441" textLength="272">ROCHELLE MIREUIL</text><text x="18" y="661" class="strong">e</text><text x="1549" y="98" textLength="264">Intermarché SUPER</text><text x="1547" y="129" textLength="265">La Rochelle et Drive</text><text x="2365" y="34" textLength="160">La Rochelle</text><text x="2449" y="89" textLength="215">Hyper U et Drive</text><text x="2883" y="98" textLength="242">FNAC La Rochelle</text><text x="2194" y="331" textLength="211">E.Leclerc Hyper</text><text x="2251" y="364" textLength="156">La Rochelle</text><text x="3057" y="671" textLength="102">METRO</text><text x="2744" y="921" textLength="175">RENAULT LA</text><text x="2744" y="952" textLength="171">ROCHELLE...</text><text x="2155" y="1056" textLength="267">Intermarché SUPER</text><text x="2153" y="1089" textLength="269">La Rochelle et Drive</text><text x="2597" y="1109" textLength="213">Lidl La Rochelle</text><text x="1796" y="1556" textLength="240">Carrefour Contact</text></g>
  <g class="orange"><text x="141" y="703" textLength="265">Les Tontons Binouz</text></g>
  <g class="pink"><text x="700" y="701" textLength="269">Aire de camping-car</text><text x="700" y="733" textLength="348">automatisée de Port-Neuf</text><text x="764" y="992" textLength="170">Le Rochelois</text></g>
  <g class="leaf"><text x="516" y="812" textLength="316">Stade Marcel Deflandre</text><text x="430" y="924" textLength="206">Résidence Club</text><text x="499" y="954" textLength="136">La Fayette</text><text x="1468" y="280" textLength="192">Piscine Lucien</text><text x="1409" y="311" textLength="251">Maylin La Rochelle</text><text x="1334" y="846" textLength="202">Parc Charruyer</text><text x="919" y="1394" textLength="237">Port de plaisance</text><text x="957" y="1424" textLength="199">de La Rochelle</text><text x="2957" y="839" textLength="218">Centre aquatique</text><text x="3067" y="869" textLength="112">Palmilud</text></g>
  <g class="redt"><text x="1912" y="794" textLength="255">Hôpital Saint-Louis</text><text x="1912" y="825" textLength="195">de La Rochelle</text></g>
  <g class="violet"><text x="2414" y="873" textLength="184">TotalEnergies</text></g>
</g>

<g class="pins">
  <g transform="translate(226 86)"><use href="#pin" fill="#78909c"/><path class="icof" d="M-14-2L0-9 14-2 0 5zM-8 3L0 7 8 3V9L0 12-8 9z"/></g>
  <g transform="translate(389 30)"><use href="#pin" fill="#1a73e8"/><path class="ico" d="M-12 5H12M0-8V14M-8-3L8 12M8-3L-8 12"/></g>
  <g transform="translate(195 399)"><use href="#pin" fill="#78909c"/><use href="#museum"/></g>
  <g transform="translate(645 364)"><use href="#pin" fill="#12b5cb"/><path class="icof" d="M0-10H13V0Q7 6 0 0zM-13-3H-2V8Q-8 14-13 7z"/></g>
  <g transform="translate(671 699)"><use href="#pin" fill="#f06292"/><use href="#bed"/></g>
  <g transform="translate(735 975)"><use href="#pin" fill="#f06292"/><use href="#bed"/></g>
  <g transform="translate(356 737)"><use href="#pin" fill="#f29900"/><path class="icof" d="M-10-10H10L2 0V8H6V11H-6V8H-2V0z"/></g>
  <g transform="translate(861 796)"><use href="#pin" fill="#34a853"/><path class="icof" d="M-14 8Q-12-3 0 0L3-6 14-8V5Q0 3-14 10z"/><circle class="icof" cx="-6" cy="-7" r="4"/></g>
  <g transform="translate(664 922)"><use href="#pin" fill="#34a853"/><path class="ico" d="M0-9L11 9H-11z"/><path class="icof" d="M0-1L5 9H-5z"/></g>
  <g transform="translate(1611 343)"><use href="#pin" fill="#34a853"/><circle class="icof" r="8"/></g>
  <g transform="translate(1185 1391)"><use href="#pin" fill="#34a853"/><path class="icof" d="M-8-10H8V-2L13 1 8 9H-8L-13 1-8-2z"/></g>
  <g transform="translate(1677 508)"><use href="#pin" fill="#12b5cb"/><use href="#museum"/></g>
  <g transform="translate(1670 1146)"><use href="#pin" fill="#12b5cb"/><use href="#museum"/></g>
  <g transform="translate(1501 900)"><use href="#pin" fill="#12b5cb"/><path class="icof" d="M-10-11h5v3h3v-3h4v3h3v-3h5v8H5V5h5v5h-20V5h5V-3h-5z"/></g>
  <g transform="translate(1606 1277)"><use href="#pin" fill="#12b5cb"/><path class="icof" d="M-11-11h22v22h-22z"/><path class="film" d="M-6-11V11M6-11V11"/></g>
  <g transform="translate(1086 1532)"><use href="#pin" fill="#12b5cb"/><path class="icof" d="M-13-7h7l3-4h6l3 4h7V9h-26z"/><circle cx="0" cy="1" r="4" fill="#12b5cb"/></g>
  <g transform="translate(1883 790)"><use href="#pin" fill="#ea5a55"/><path class="hico" d="M-7-10V10M7-10V10M-7 0H7"/></g>
  <g transform="translate(2626 857)"><use href="#pin" fill="#7a80cc"/><path class="icof" d="M-9-11H4V10H-9z"/><path class="pump" d="M-6-8H1V-2H-6z"/><path class="ico" d="M6-6L11-2V7H6"/></g>
  <g fill="#5291f5">
    <g transform="translate(823 407)"><use href="#pin"/><use href="#cart"/></g><g transform="translate(60 645)"><use href="#pin"/><use href="#cart"/></g><g transform="translate(1144 104)"><use href="#pin"/><use href="#cart"/></g><g transform="translate(1841 92)"><use href="#pin"/><use href="#cart"/></g><g transform="translate(2692 67)"><use href="#pin"/><use href="#cart"/></g><g transform="translate(2436 328)"><use href="#pin"/><use href="#cart"/></g><g transform="translate(2449 1053)"><use href="#pin"/><use href="#cart"/></g><g transform="translate(2568 1088)"><use href="#pin"/><use href="#cart"/></g><g transform="translate(2065 1536)"><use href="#pin"/><use href="#cart"/></g>
    <g transform="translate(2855 75)"><use href="#pin"/><use href="#bag"/></g><g transform="translate(2716 917)"><use href="#pin"/><use href="#bag"/></g>
    <path d="M2545 27h16l-8 12z"/>
  </g>
  <g transform="translate(1652 429)"><rect class="station" x="-15" y="-15" width="30" height="30" rx="4"/><path class="icof" d="M-9-9H9V6H-9zM-6 8h3v3h-5zM6 8H3v3h5z"/><path class="slot" d="M-6-5h5v5h-5zM1-5h5v5H1z"/></g>
  <g transform="translate(1859 1077)"><rect class="station" x="-15" y="-15" width="30" height="30" rx="4"/><path class="icof" d="M-9-9H9V6H-9zM-6 8h3v3h-5zM6 8H3v3h5z"/><path class="slot" d="M-6-5h5v5h-5zM1-5h5v5H1z"/></g>
  <path class="selected" fill-rule="evenodd" d="M1305 499C1301 473 1266 468 1266 431A39 39 0 1 1 1344 431C1344 468 1309 473 1305 499zM1287 431a18 18 0 1 0 36 0a18 18 0 1 0-36 0z"/>
  <text class="inpin" transform="translate(1307 441) rotate(-80)">Br</text>
</g>
</svg>
</main>
</body>
</html>
```
FILE: styles.css
```css
* { box-sizing: border-box; }
body { margin: 0; background: #fff; color: #000; font-family: Lato, "Open Sans", sans-serif; }

.topbar {
  display: flex;
  width: 1897px;
  height: 112px;
  padding: 9px 79px 0 11px;
  border: solid #000;
  border-width: 4px 5px 5px 3px;
}
.logo { width: 134px; height: 84px; padding: 25px 0 0 17px; border: 5px solid #000; }
.brand { margin-left: 313px; padding-top: 28px; }
.nav { display: flex; margin-left: auto; padding-top: 11px; }
.nav-loc, .nav-stock { padding-top: 13px; }
.nav-loc { margin-right: 15px; }
.nav-stock { margin-right: 29px; }
.login { width: 179px; height: 54px; padding: 8px 0 0 13px; border: 5px solid #00a2e8; border-radius: 24px / 11px; }
.word { display: block; height: 24px; font-size: 23.5px; line-height: 24px; white-space: nowrap; transform-origin: left center; font-variant-ligatures: none; }
.word-logo { width: 62px; transform: scaleX(.955); }
.word-brand { width: 179px; transform: scaleX(.96); }
.word-loc { width: 127px; transform: scaleX(1.03); }
.word-stock { width: 57px; transform: scaleX(1.03); }
.word-login { width: 138px; transform: scaleX(1.03); }

.content { padding: 17px 0 0 18px; }
.map { display: block; width: 1045px; height: 537px; overflow: hidden; font-family: Roboto, sans-serif; }
.zone { fill: #dfe1e6; }
.ground, .land, .islets { fill: #e9ebed; }
.urban { fill: #fef5d9; }
.hospital { fill: #fce5e3; }
.park { fill: #afdfbc; }
.water { fill: #9cc0fa; }
.berth { stroke: #dce7f7; stroke-width: 4; }
.blockline { fill: none; stroke: #fff; stroke-width: 3; }
.stream, .canal, .canalbank, .rail, .tracks, .trail, .minor, .road, .pier, .ferry { fill: none; stroke-linejoin: round; }
.stream { stroke: #9cc0fa; stroke-width: 3.5; }
.canal { stroke: #9cc0fa; stroke-width: 12; }
.canalbank { stroke: #b5d8c5; stroke-width: 3; stroke-dasharray: 12 4; }
.rail { stroke: #d5d8dc; stroke-width: 3; }
.tracks { stroke: #d3d7db; stroke-width: 5; }
.trail { stroke: #9bd4aa; stroke-width: 2.5; stroke-dasharray: 9 3; }
.minor { stroke: #fafbfc; stroke-width: 2.8; }
.road { stroke: #fff; stroke-width: 8; stroke-linecap: round; }
.big { stroke-width: 13; }
.lane { stroke-width: 4; }
.pier { stroke: #e9ebed; stroke-width: 8; }
.ferry { stroke: #75a5f6; stroke-width: 2.5; stroke-dasharray: 14 6; }
.hwy { fill: none; stroke-linejoin: round; }
.edge { stroke: #f9b631; stroke-width: 20; }
.fill { stroke: #fddc88; stroke-width: 12; }
.edge.ramp { stroke-width: 11; }
.fill.ramp { stroke-width: 4; }
.circle { fill: #e9ebed; stroke: #fff; stroke-width: 8; }

.red { fill: #dc5e5d; }
.green { fill: #689f38; }
.yellow { fill: #fdd835; stroke: #c9a91f; stroke-width: 2; }
.st { fill: #fff; font-size: 20px; font-weight: 500; }
.st.dark { fill: #4d430f; }
.street { fill: #686b70; font-size: 22px; paint-order: stroke; stroke: #f1f2f4; stroke-width: 4px; }
.area { fill: #5f6368; font-size: 27px; paint-order: stroke; stroke: #f3f4f5; stroke-width: 4px; }
.city { fill: #202124; font-size: 43px; font-weight: 500; paint-order: stroke; stroke: #fff; stroke-width: 5px; }
.poi { font-size: 30px; paint-order: stroke; stroke: #f5f7f8; stroke-width: 4px; }
.slate { fill: #78909c; }
.teal { fill: #269ba3; }
.blue { fill: #4285e8; }
.strong { font-weight: 500; }
.orange { fill: #d98532; }
.pink { fill: #e8488a; }
.leaf { fill: #37945a; }
.redt { fill: #e15550; }
.violet { fill: #737acb; }
.ico { fill: none; stroke: #fff; stroke-width: 3; }
.icof { fill: #fff; }
.hico { fill: none; stroke: #fff; stroke-width: 5; }
.film { stroke: #12b5cb; stroke-width: 3; stroke-dasharray: 3 3; }
.pump { fill: #7a80cc; }
.station, .slot { fill: #1a73e8; }
.selected { fill: #b8392b; }
.inpin { fill: #686b70; font-size: 21px; }
```
